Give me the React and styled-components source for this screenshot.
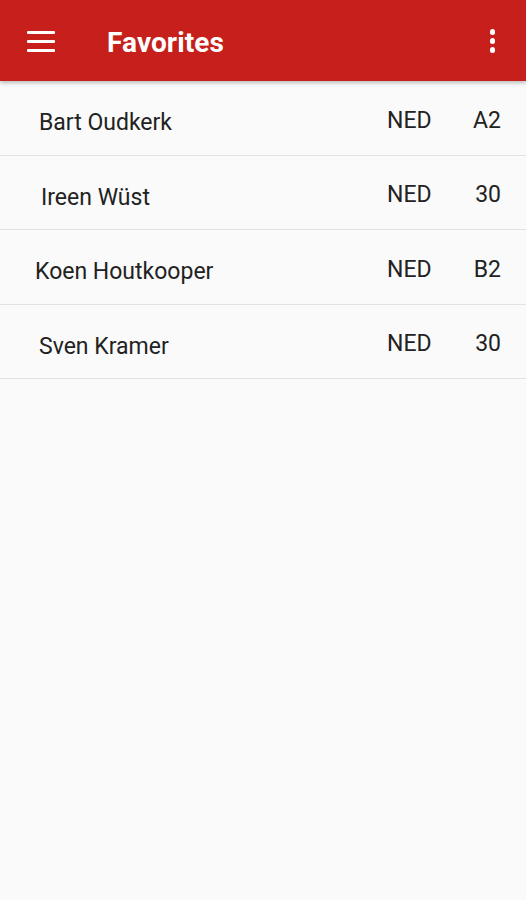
import React from 'react';
import styled, { createGlobalStyle } from 'styled-components';

const GlobalStyle = createGlobalStyle`
  html, body {
    margin: 0;
    padding: 0;
    background: #fafafa;
  }
  body {
    font-family: Roboto, 'Noto Sans', 'Liberation Sans', sans-serif;
  }
`;

const favorites = [
  { name: 'Bart Oudkerk', country: 'NED', code: 'A2', indent: 39 },
  { name: 'Ireen Wüst', country: 'NED', code: '30', indent: 41 },
  { name: 'Koen Houtkooper', country: 'NED', code: 'B2', indent: 35 },
  { name: 'Sven Kramer', country: 'NED', code: '30', indent: 39 },
];

const Screen = styled.div`
  min-height: 900px;
  background: #fafafa;
  display: flex;
  flex-direction: column;
`;

const Toolbar = styled.header`
  height: 81px;
  background: #c61f1c;
  display: flex;
  align-items: center;
  padding: 0 28px 0 27px;
  box-shadow: 0 2px 4px rgba(0, 0, 0, 0.25);
  position: relative;
  z-index: 2;
`;

const MenuButton = styled.div`
  width: 28px;
  height: 21px;
  display: flex;
  flex-direction: column;
  justify-content: space-between;
  margin-top: 1px;

  span {
    display: block;
    height: 3px;
    background: #fff;
    border-radius: 1px;
  }
`;

const Title = styled.h1`
  margin: 4px 0 0 52px;
  flex: 1;
  color: #fff;
  font-size: 28px;
  font-weight: 700;
  letter-spacing: 0.1px;
`;

const Overflow = styled.div`
  display: flex;
  flex-direction: column;
  gap: 3.5px;
  margin-top: 1px;
  margin-right: 3px;

  span {
    width: 5.5px;
    height: 5.5px;
    border-radius: 50%;
    background: #fff;
  }
`;

const List = styled.ul`
  list-style: none;
  margin: 0;
  padding: 0;
`;

const Row = styled.li`
  height: 74.5px;
  box-sizing: border-box;
  border-bottom: 1.5px solid #e2e2e2;
  display: flex;
  align-items: center;
  padding-right: 25px;
  padding-left: ${(p) => p.$indent}px;
  color: #222;
  font-size: 23px;
`;

const Name = styled.span`
  flex: 1;
  padding-top: 10px;
`;

const Country = styled.span`
  width: 62px;
  padding-top: 5px;
`;

const Code = styled.span`
  width: 52px;
  text-align: right;
  padding-top: 5px;
`;

export default function App() {
  return (
    <Screen>
      <GlobalStyle />
      <Toolbar>
        <MenuButton>
          <span />
          <span />
          <span />
        </MenuButton>
        <Title>Favorites</Title>
        <Overflow>
          <span />
          <span />
          <span />
        </Overflow>
      </Toolbar>
      <List>
        {favorites.map((f) => (
          <Row key={f.name} $indent={f.indent}>
            <Name>{f.name}</Name>
            <Country>{f.country}</Country>
            <Code>{f.code}</Code>
          </Row>
        ))}
      </List>
    </Screen>
  );
}
